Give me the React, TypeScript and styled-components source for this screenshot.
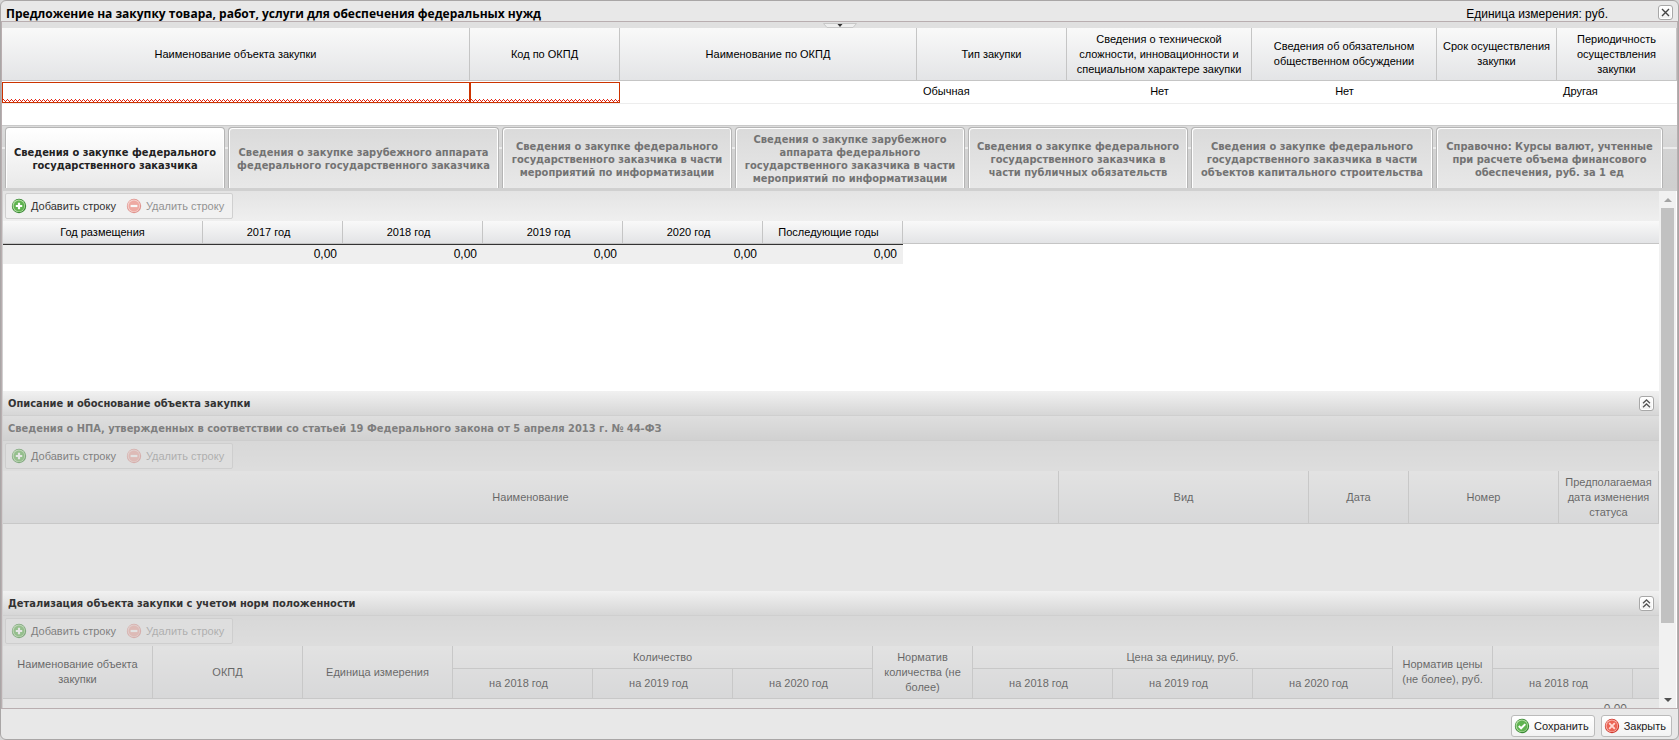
import React from 'react';
import styled, { createGlobalStyle, css } from 'styled-components';

const textFont = '"Liberation Sans", Arial, sans-serif';
const boldFont = '"DejaVu Sans Condensed", Tahoma, sans-serif';
const titleFont = '"Open Sans", Tahoma, sans-serif';
const wave =
  "url(\"data:image/svg+xml,%3Csvg xmlns='http://www.w3.org/2000/svg' width='4' height='3' fill='%23e02010' shape-rendering='crispEdges'%3E%3Crect x='0' y='0' width='1' height='1'/%3E%3Crect x='1' y='1' width='1' height='1'/%3E%3Crect x='2' y='2' width='1' height='1'/%3E%3Crect x='3' y='1' width='1' height='1'/%3E%3C/svg%3E\")";

const GlobalStyle = createGlobalStyle`
  *, *::before, *::after { box-sizing: border-box; }
  body { margin: 0; background: #d6d6d6; }
  button, input { font: inherit; color: inherit; }
`;

const Window = styled.main`
  display: flex;
  flex-direction: column;
  height: 100vh;
  border: 1px solid #a9a6a6;
  border-radius: 6px;
  overflow: hidden;
  background: #e8e8e8;
  color: #000;
  font: 11px/15px ${textFont};
`;

const TitleBar = styled.header`
  display: flex;
  align-items: center;
  justify-content: space-between;
  height: 20px;
  padding: 2px 5px 0;
  flex: none;
`;

const Title = styled.h1`
  margin: 0;
  padding-top: 4px;
  flex: 1;
  font: bold 12px/14px ${titleFont};
`;

const Unit = styled.span`
  margin-right: 50px;
  padding-top: 4px;
  font-size: 12px;
  line-height: 14px;
`;

const ToolButton = styled.button`
  display: flex;
  align-items: center;
  justify-content: center;
  width: 15px;
  height: 15px;
  padding: 0;
  border: 1px solid #a8a8a8;
  border-radius: 3px;
  background: linear-gradient(#fff, #f0f0f0);
  box-shadow: inset 0 0 0 1px #fff;
  color: #555;
`;

const Body = styled.div`
  display: flex;
  flex-direction: column;
  flex: 1;
  min-height: 0;
  border: 1px solid #b9aeb0;
  background: #fff;
`;

const Splitter = styled.div`
  display: flex;
  justify-content: center;
  height: 6px;
  flex: none;
  background: #e0e0e0;
`;

const Handle = styled.button`
  display: flex;
  width: 34px;
  height: 6px;
  padding: 0;
  border: 0;
  background: none;
`;

const Table = styled.table<{ $width?: string }>`
  width: ${(p) => p.$width ?? '100%'};
  border-collapse: separate;
  border-spacing: 0;
  table-layout: fixed;
`;

const Col = styled.col<{ $w?: number }>`
  ${(p) => p.$w && css`width: ${p.$w}px;`}
`;

const HeadRow = styled.tr<{ $h: number }>`
  height: ${(p) => p.$h}px;
`;

const Th = styled.th<{ $numeric?: boolean }>`
  padding: 0 ${(p) => (p.$numeric ? 10 : 2)}px 0 2px;
  border-right: 1px solid #c5c5c5;
  border-bottom: 1px solid #c5c5c5;
  font-weight: normal;
  vertical-align: middle;
  white-space: pre-line;
`;

const Head = styled.thead`
  background: linear-gradient(#f9f9f9, #e3e4e6);
`;

const Td = styled.td<{ $align?: string }>`
  height: 23px;
  padding: 0 6px 2px;
  border-bottom: 1px solid #ededed;
  text-align: ${(p) => p.$align ?? 'left'};
`;

const InvalidTd = styled(Td)`
  padding: 0;
`;

const InvalidInput = styled.input`
  display: block;
  width: 100%;
  height: 21px;
  padding: 0 5px;
  border: 1px solid #cc3300;
  background: #fff ${wave} repeat-x left bottom;
  outline: 0;
`;

const PurchaseGrid = styled.div`
  height: 97px;
  flex: none;
`;

const TabStrip = styled.nav`
  display: flex;
  gap: 3px;
  flex: none;
  height: 66px;
  padding: 1px 3px 0;
  border-top: 1px solid #c9c9c9;
  border-bottom: 3px solid #d0d0d0;
  background: linear-gradient(#dcdcdc 0, #d6d6d6 21px, #ececec 21px, #ececec 23px, #d3d3d3 23px, #cfcfcf);
`;

const Tab = styled.button<{ $active?: boolean; $w: number }>`
  flex: 0 1 ${(p) => p.$w}px;
  padding: 2px 2px 0;
  border: 1px solid #b5b5b5;
  border-bottom: 0;
  border-radius: 4px 4px 0 0;
  background: ${(p) => (p.$active ? 'linear-gradient(#fff, #e9e9e9)' : 'linear-gradient(#dadada, #e8e8e8)')};
  box-shadow: inset 1px 1px 0 #fff, inset -1px 0 0 #fff;
  color: ${(p) => (p.$active ? '#222' : '#737373')};
  font: bold 11px/13px ${boldFont};
  white-space: pre;
`;

const Viewport = styled.div`
  display: flex;
  flex: 1;
  min-height: 0;
  padding-right: 1px;
`;

const Content = styled.div`
  flex: 1;
  min-width: 0;
  overflow: hidden;
  border-left: 1px solid #d0d0d0;
  background: #fff;
`;

const Toolbar = styled.div`
  display: flex;
  height: 30px;
  padding: 2px;
  background: linear-gradient(#e4e4e4, #efefef);
`;

const ButtonGroup = styled.div`
  display: flex;
  align-items: center;
  gap: 10px;
  height: 26px;
  padding: 0 8px 0 5px;
  border: 1px solid #d0d0d0;
  border-radius: 2px;
  background: #f1f1f1;
`;

const RowButton = styled.button`
  display: flex;
  align-items: center;
  gap: 4px;
  padding: 0;
  border: 0;
  background: none;
  color: #333;

  &:disabled { opacity: 0.5; }
`;

const SectionHead = styled.header`
  display: flex;
  align-items: center;
  justify-content: space-between;
  height: 25px;
  padding: 0 5px;
  border-bottom: 1px solid #cfcfcf;
  background: linear-gradient(#f1f1f1, #d6d6d6);
`;

const SectionTitle = styled.h2`
  margin: 0;
  padding-top: 1px;
  color: #333;
  font: bold 11px/14px ${boldFont};
`;

const Mask = styled.div`
  background: #ccc;
`;

const Masked = styled.div`
  background: #fff;
  opacity: 0.5;
`;

const GridBox = styled.div<{ $h: number }>`
  height: ${(p) => p.$h}px;
  overflow: hidden;
`;

const YearHead = styled.div`
  background: linear-gradient(#f9f9f9, #e3e4e6);
  height: 23px;
  border-bottom: 1px solid #c5c5c5;
`;

const YearTh = styled(Th)`
  border-bottom: 0;
`;

const SumTd = styled.td`
  height: 20px;
  padding: 0 6px;
  border-top: 1px solid #333;
  background: #efefef;
  font-size: 12px;
  text-align: right;
`;

const DetailTd = styled.td`
  height: 20px;
  padding: 0 6px;
  font-size: 12px;
  text-align: right;
`;

const ScrollBar = styled.div`
  display: flex;
  flex-direction: column;
  align-items: center;
  width: 17px;
  flex: none;
  background: #f1f1f1;
`;

const ScrollArrow = styled.button`
  display: flex;
  align-items: center;
  justify-content: center;
  width: 17px;
  height: 17px;
  padding: 0;
  border: 0;
  background: none;
`;

const Track = styled.div`
  flex: 1;
`;

const Thumb = styled.div`
  width: 13px;
  height: 86%;
  background: #c1c1c1;
`;

const Footer = styled.footer`
  display: flex;
  justify-content: flex-end;
  align-items: center;
  gap: 6px;
  height: 30px;
  padding: 4px 6px 0;
  flex: none;
`;

const FooterButton = styled.button`
  display: flex;
  align-items: center;
  gap: 4px;
  height: 22px;
  padding: 0 5px 0 2px;
  border: 1px solid #bbb;
  border-radius: 3px;
  background: linear-gradient(#fff, #f2f2f2);
  color: #222;
`;

type IconKind = 'add' | 'remove' | 'save' | 'cancel';

function RoundIcon({ kind }: { kind: IconKind }) {
  const green = kind === 'add' || kind === 'save';
  const dark = green ? '#3a8a35' : '#d0392f';
  const light = green ? '#b5dfa6' : '#f9b5ad';
  const mid = green ? '#5fb350' : '#ec6455';
  const mark = kind === 'cancel' ? '#ffd9d4' : '#fff';
  return (
    <svg width="16" height="16" viewBox="0 0 16 16" aria-hidden="true">
      <circle cx="8" cy="8" r="7.2" fill={dark} />
      <circle cx="7.8" cy="7.8" r="6.3" fill={light} />
      <circle cx="8" cy="8" r="5.4" fill={mid} />
      {kind === 'add' && <path d="M8 4.8v6.4M4.8 8h6.4" stroke={mark} strokeWidth="2.2" />}
      {kind === 'remove' && <path d="M4.6 8h6.8" stroke={mark} strokeWidth="2.2" />}
      {kind === 'save' && <path d="M4.8 8l2.3 2.3 4.2-4.2" stroke={mark} strokeWidth="2" fill="none" />}
      {kind === 'cancel' && <path d="M5.2 5.2l5.6 5.6M10.8 5.2l-5.6 5.6" stroke={mark} strokeWidth="1.8" />}
    </svg>
  );
}

function Collapse() {
  return (
    <ToolButton aria-label="Свернуть">
      <svg width="9" height="9" viewBox="0 0 9 9" fill="none" stroke="#555" strokeWidth="1.3">
        <path d="M1 4.2L4.5 1 8 4.2M1 8.2L4.5 5 8 8.2" />
      </svg>
    </ToolButton>
  );
}

function RowTools() {
  return (
    <Toolbar>
      <ButtonGroup>
        <RowButton><RoundIcon kind="add" />Добавить строку</RowButton>
        <RowButton disabled><RoundIcon kind="remove" />Удалить строку</RowButton>
      </ButtonGroup>
    </Toolbar>
  );
}

const purchaseColumns: { label: string; w?: number }[] = [
  { label: 'Наименование объекта закупки' },
  { label: 'Код по ОКПД', w: 150 },
  { label: 'Наименование по ОКПД', w: 297 },
  { label: 'Тип закупки', w: 150 },
  { label: 'Сведения о технической\nсложности, инновационности и\nспециальном характере закупки', w: 185 },
  { label: 'Сведения об обязательном\nобщественном обсуждении', w: 185 },
  { label: 'Срок осуществления\nзакупки', w: 120 },
  { label: 'Периодичность\nосуществления\nзакупки', w: 120 },
];

const tabs = [
  { w: 220, label: 'Сведения о закупке федерального\nгосударственного заказчика' },
  { w: 271, label: 'Сведения о закупке зарубежного аппарата\nфедерального государственного заказчика' },
  { w: 230, label: 'Сведения о закупке федерального\nгосударственного заказчика в части\nмероприятий по информатизации' },
  { w: 230, label: 'Сведения о закупке зарубежного\nаппарата федерального\nгосударственного заказчика в части\nмероприятий по информатизации' },
  { w: 220, label: 'Сведения о закупке федерального\nгосударственного заказчика в\nчасти публичных обязательств' },
  { w: 242, label: 'Сведения о закупке федерального\nгосударственного заказчика в части\nобъектов капитального строительства' },
  { w: 227, label: 'Справочно: Курсы валют, учтенные\nпри расчете объема финансового\nобеспечения, руб. за 1 ед' },
];

const years = ['2017 год', '2018 год', '2019 год', '2020 год', 'Последующие годы'];
const planYears = ['на 2018 год', 'на 2019 год', 'на 2020 год'];

export default function App() {
  return (
    <Window>
      <GlobalStyle />
      <TitleBar>
        <Title>Предложение на закупку товара, работ, услуги для обеспечения федеральных нужд</Title>
        <Unit>Единица измерения: руб.</Unit>
        <ToolButton aria-label="Закрыть окно">
          <svg width="9" height="9" viewBox="0 0 9 9" stroke="#444" strokeWidth="1.4">
            <path d="M1 1l7 7M8 1L1 8" />
          </svg>
        </ToolButton>
      </TitleBar>
      <Body>
        <Splitter>
          <Handle aria-label="Свернуть панель">
            <svg width="34" height="6" viewBox="0 0 34 6">
              <path d="M0.5 1.5h33L30 5.5H4z" fill="#eee" stroke="#c8c8c8" />
              <path d="M14.5 2h5L17 5z" fill="#333" />
            </svg>
          </Handle>
        </Splitter>
        <PurchaseGrid>
          <Table>
            <colgroup>{purchaseColumns.map((c) => <Col key={c.label} $w={c.w} />)}</colgroup>
            <Head>
              <HeadRow $h={53}>{purchaseColumns.map((c) => <Th key={c.label}>{c.label}</Th>)}</HeadRow>
            </Head>
            <tbody>
              <tr>
                <InvalidTd><InvalidInput aria-label="Наименование объекта закупки" /></InvalidTd>
                <InvalidTd><InvalidInput aria-label="Код по ОКПД" /></InvalidTd>
                <Td />
                <Td>Обычная</Td>
                <Td $align="center">Нет</Td>
                <Td $align="center">Нет</Td>
                <Td />
                <Td>Другая</Td>
              </tr>
            </tbody>
          </Table>
        </PurchaseGrid>
        <TabStrip>
          {tabs.map((t, i) => <Tab key={t.label} $w={t.w} $active={i === 0}>{t.label}</Tab>)}
        </TabStrip>
        <Viewport>
          <Content>
            <RowTools />
            <GridBox $h={170}>
              <YearHead>
                <Table $width="900px">
                  <colgroup><Col $w={200} />{years.map((y) => <Col key={y} $w={140} />)}</colgroup>
                  <thead>
                    <HeadRow $h={22}>
                      <YearTh>Год размещения</YearTh>
                      {years.map((y) => <YearTh key={y} $numeric>{y}</YearTh>)}
                    </HeadRow>
                  </thead>
                </Table>
              </YearHead>
              <Table $width="900px">
                <colgroup><Col $w={200} />{years.map((y) => <Col key={y} $w={140} />)}</colgroup>
                <tbody>
                  <tr><SumTd />{years.map((y) => <SumTd key={y}>0,00</SumTd>)}</tr>
                </tbody>
              </Table>
            </GridBox>
            <SectionHead>
              <SectionTitle>Описание и обоснование объекта закупки</SectionTitle>
              <Collapse />
            </SectionHead>
            <Mask>
              <Masked>
                <SectionHead>
                  <SectionTitle>
                    Сведения о НПА, утвержденных в соответствии со статьей 19 Федерального закона от 5 апреля 2013 г. № 44-ФЗ
                  </SectionTitle>
                </SectionHead>
                <RowTools />
                <GridBox $h={120}>
                  <Table>
                    <colgroup><Col /><Col $w={250} /><Col $w={100} /><Col $w={150} /><Col $w={100} /></colgroup>
                    <Head>
                      <HeadRow $h={53}>
                        <Th>Наименование</Th>
                        <Th>Вид</Th>
                        <Th>Дата</Th>
                        <Th>Номер</Th>
                        <Th>{'Предполагаемая\nдата изменения\nстатуса'}</Th>
                      </HeadRow>
                    </Head>
                  </Table>
                </GridBox>
              </Masked>
            </Mask>
            <SectionHead>
              <SectionTitle>Детализация объекта закупки с учетом норм положенности</SectionTitle>
              <Collapse />
            </SectionHead>
            <Mask>
              <Masked>
                <RowTools />
                <Table $width="1910px">
                  <colgroup>
                    <Col $w={150} /><Col $w={150} /><Col $w={150} />
                    <Col $w={140} /><Col $w={140} /><Col $w={140} />
                    <Col $w={100} />
                    <Col $w={140} /><Col $w={140} /><Col $w={140} />
                    <Col $w={100} />
                    <Col $w={140} /><Col $w={140} /><Col $w={140} />
                  </colgroup>
                  <Head>
                    <HeadRow $h={23}>
                      <Th rowSpan={2}>{'Наименование объекта\nзакупки'}</Th>
                      <Th rowSpan={2}>ОКПД</Th>
                      <Th rowSpan={2}>Единица измерения</Th>
                      <Th colSpan={3}>Количество</Th>
                      <Th rowSpan={2}>{'Норматив\nколичества (не\nболее)'}</Th>
                      <Th colSpan={3}>Цена за единицу, руб.</Th>
                      <Th rowSpan={2}>{'Норматив цены\n(не более), руб.'}</Th>
                      <Th colSpan={3} />
                    </HeadRow>
                    <HeadRow $h={30}>
                      {[0, 1, 2].flatMap((g) => planYears.map((y) => (
                        <Th key={g + y} $numeric>{g === 2 && y !== planYears[0] ? '' : y}</Th>
                      )))}
                    </HeadRow>
                  </Head>
                  <tbody>
                    <tr>
                      <DetailTd colSpan={11} />
                      <DetailTd>0,00</DetailTd>
                      <DetailTd colSpan={2} />
                    </tr>
                  </tbody>
                </Table>
              </Masked>
            </Mask>
          </Content>
          <ScrollBar>
            <ScrollArrow aria-label="Вверх">
              <svg width="8" height="4" viewBox="0 0 8 4"><path d="M0 4L4 0l4 4z" fill="#a3a3a3" /></svg>
            </ScrollArrow>
            <Track><Thumb /></Track>
            <ScrollArrow aria-label="Вниз">
              <svg width="8" height="4" viewBox="0 0 8 4"><path d="M0 0l4 4 4-4z" fill="#505050" /></svg>
            </ScrollArrow>
          </ScrollBar>
        </Viewport>
      </Body>
      <Footer>
        <FooterButton><RoundIcon kind="save" />Сохранить</FooterButton>
        <FooterButton><RoundIcon kind="cancel" />Закрыть</FooterButton>
      </Footer>
    </Window>
  );
}
